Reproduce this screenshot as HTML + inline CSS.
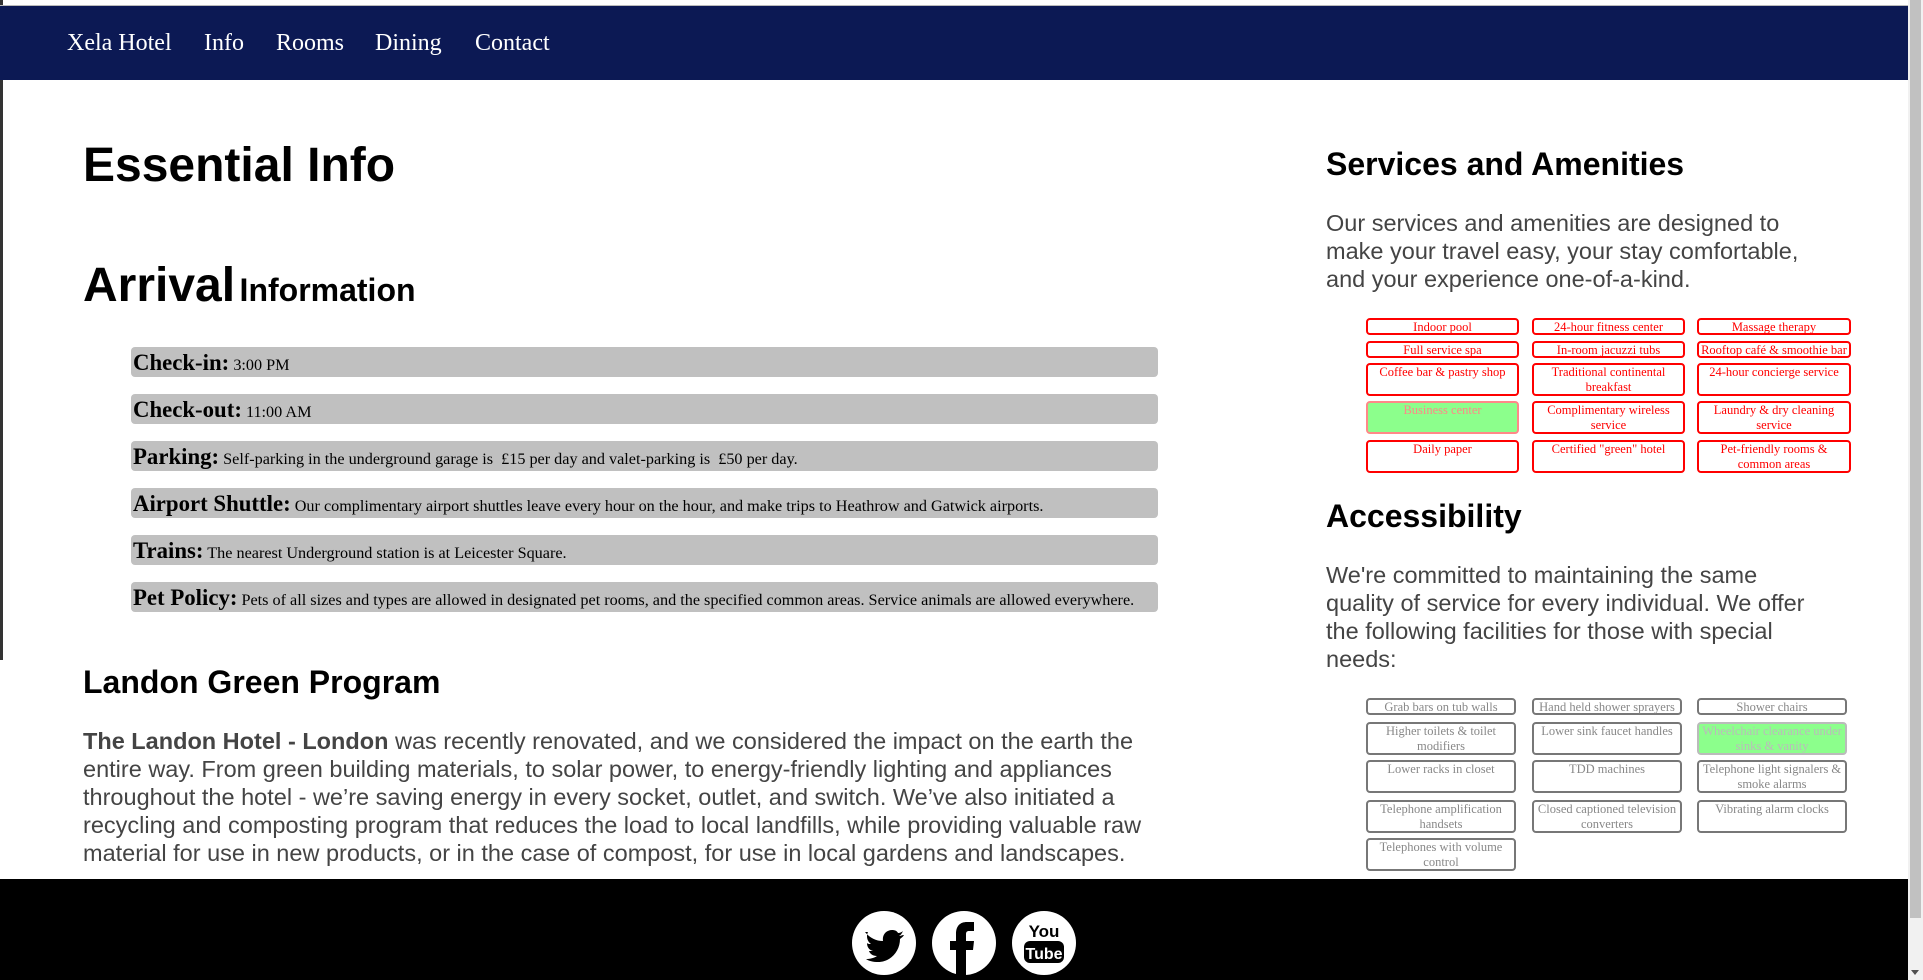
<!DOCTYPE html>
<html><head><meta charset="utf-8"><style>
*{margin:0;padding:0;box-sizing:border-box}
body{width:1923px;height:980px;overflow:hidden;background:#fff;position:relative;font-family:"Liberation Sans",sans-serif}
.a{position:absolute;white-space:nowrap}
#nav{position:absolute;left:0;top:5px;width:1908px;height:75px;background:#0c1954;border-top:1px solid #bbb}
#nav span{position:absolute;top:24px;font:24px "Liberation Serif",serif;color:#fff}
.bar{position:absolute;left:131px;width:1027px;height:30px;background:#c0c0c0;border-radius:4px;font:16.2px "Liberation Serif",serif;padding:3px 2px;white-space:nowrap;color:#000}
.bar b{font-size:22.8px}
.bx{position:absolute;border:2px solid red;border-radius:4px;color:red;font:12.5px/14.5px "Liberation Serif",serif;text-align:center;padding:0 1px}
.gx{position:absolute;border:2px solid #777;border-radius:4px;color:#888;font:12.5px/14.5px "Liberation Serif",serif;text-align:center;padding:0 1px}
.p{position:absolute;font-size:23.5px;line-height:28px;color:#444}
</style></head><body>
<div style="position:absolute;left:0;top:0;width:3px;height:660px;background:#333"></div>
<div id="nav"><span style="left:67px">Xela Hotel</span><span style="left:204px">Info</span><span style="left:276px">Rooms</span><span style="left:375px">Dining</span><span style="left:475px">Contact</span></div>

<div class="a" style="left:83px;top:138px;font-size:48px;font-weight:bold">Essential Info</div>
<div class="a" style="left:83px;top:258px;font-weight:bold"><span style="font-size:48px">Arrival</span> <span style="font-size:32px">Information</span></div>

<div class="bar" style="top:347px"><b>Check-in:</b> 3:00 PM</div>
<div class="bar" style="top:394px"><b>Check-out:</b> 11:00 AM</div>
<div class="bar" style="top:441px"><b>Parking:</b> Self-parking in the underground garage is &nbsp;£15 per day and valet-parking is &nbsp;£50 per day.</div>
<div class="bar" style="top:488px"><b>Airport Shuttle:</b> Our complimentary airport shuttles leave every hour on the hour, and make trips to Heathrow and Gatwick airports.</div>
<div class="bar" style="top:535px"><b>Trains:</b> The nearest Underground station is at Leicester Square.</div>
<div class="bar" style="top:582px"><b>Pet Policy:</b> Pets of all sizes and types are allowed in designated pet rooms, and the specified common areas. Service animals are allowed everywhere.</div>

<div class="a" style="left:83px;top:664px;font-size:32px;font-weight:bold">Landon Green Program</div>
<div class="p" style="left:83px;top:727px;width:1095px"><b>The Landon Hotel - London</b> was recently renovated, and we considered the impact on the earth the entire way. From green building materials, to solar power, to energy-friendly lighting and appliances throughout the hotel - we’re saving energy in every socket, outlet, and switch. We’ve also initiated a recycling and composting program that reduces the load to local landfills, while providing valuable raw material for use in new products, or in the case of compost, for use in local gardens and landscapes.</div>

<div class="a" style="left:1326px;top:146px;font-size:32px;font-weight:bold">Services and Amenities</div>
<div class="p" style="left:1326px;top:209px;width:505px">Our services and amenities are designed to make your travel easy, your stay comfortable, and your experience one-of-a-kind.</div>

<div class="bx" style="left:1366px;top:318px;width:153px;height:17px">Indoor pool</div>
<div class="bx" style="left:1532px;top:318px;width:153px;height:17px">24-hour fitness center</div>
<div class="bx" style="left:1697px;top:318px;width:154px;height:17px">Massage therapy</div>
<div class="bx" style="left:1366px;top:341px;width:153px;height:17px">Full service spa</div>
<div class="bx" style="left:1532px;top:341px;width:153px;height:17px">In-room jacuzzi tubs</div>
<div class="bx" style="left:1697px;top:341px;width:154px;height:17px">Rooftop café &amp; smoothie bar</div>
<div class="bx" style="left:1366px;top:363px;width:153px;height:33px">Coffee bar &amp; pastry shop</div>
<div class="bx" style="left:1532px;top:363px;width:153px;height:33px">Traditional continental breakfast</div>
<div class="bx" style="left:1697px;top:363px;width:154px;height:33px">24-hour concierge service</div>
<div class="bx" style="left:1366px;top:401px;width:153px;height:33px;background:#8cff8c;border-color:#f88;color:#f88">Business center</div>
<div class="bx" style="left:1532px;top:401px;width:153px;height:33px">Complimentary wireless service</div>
<div class="bx" style="left:1697px;top:401px;width:154px;height:33px">Laundry &amp; dry cleaning service</div>
<div class="bx" style="left:1366px;top:440px;width:153px;height:33px">Daily paper</div>
<div class="bx" style="left:1532px;top:440px;width:153px;height:33px">Certified "green" hotel</div>
<div class="bx" style="left:1697px;top:440px;width:154px;height:33px;padding:0">Pet-friendly rooms &amp; common areas</div>

<div class="a" style="left:1326px;top:498px;font-size:32px;font-weight:bold">Accessibility</div>
<div class="p" style="left:1326px;top:561px;width:505px">We're committed to maintaining the same quality of service for every individual. We offer the following facilities for those with special needs:</div>

<div class="gx" style="left:1366px;top:698px;width:150px;height:17px">Grab bars on tub walls</div>
<div class="gx" style="left:1532px;top:698px;width:150px;height:17px">Hand held shower sprayers</div>
<div class="gx" style="left:1697px;top:698px;width:150px;height:17px">Shower chairs</div>
<div class="gx" style="left:1366px;top:722px;width:150px;height:33px">Higher toilets &amp; toilet modifiers</div>
<div class="gx" style="left:1532px;top:722px;width:150px;height:33px">Lower sink faucet handles</div>
<div class="gx" style="left:1697px;top:722px;width:150px;height:33px;background:#8cff8c;border-color:#bbb;color:#bbb">Wheelchair clearance under sinks &amp; vanity</div>
<div class="gx" style="left:1366px;top:760px;width:150px;height:33px">Lower racks in closet</div>
<div class="gx" style="left:1532px;top:760px;width:150px;height:33px">TDD machines</div>
<div class="gx" style="left:1697px;top:760px;width:150px;height:33px">Telephone light signalers &amp; smoke alarms</div>
<div class="gx" style="left:1366px;top:800px;width:150px;height:33px">Telephone amplification handsets</div>
<div class="gx" style="left:1532px;top:800px;width:150px;height:33px">Closed captioned television converters</div>
<div class="gx" style="left:1697px;top:800px;width:150px;height:33px">Vibrating alarm clocks</div>
<div class="gx" style="left:1366px;top:838px;width:150px;height:33px">Telephones with volume control</div>

<div style="position:absolute;left:0;top:879px;width:1908px;height:101px;background:#000"></div>
<svg style="position:absolute;left:850px;top:910px" width="230" height="68" viewBox="0 0 230 68">
<circle cx="34" cy="33" r="32" fill="#fff"/>
<path d="M15 22c5 6 11 9 18 9-1-6 3-11 9-11 3 0 5 1 6 3 2 0 4-1 5-2-1 2-2 4-4 5 2 0 3-1 5-1-1 2-3 3-4 4 0 12-9 23-22 23-5 0-9-1-12-3 4 0 8-1 11-3-4 0-7-2-8-5h4c-4-1-6-4-6-8 1 1 2 1 4 1-4-3-5-8-3-12z" fill="#000"/>
<circle cx="114" cy="33" r="32" fill="#fff"/>
<path d="M106 66V40h-6v-9h6v-7c0-8 4-12 11-12h7v9h-5c-2 0-3 1-3 3v7h8l-1 9h-7v26z" fill="#000"/>
<circle cx="194" cy="33" r="32" fill="#fff"/>
<rect x="174" y="31" width="40" height="22" rx="6" fill="#000"/>
<text x="194" y="27" text-anchor="middle" font-family="Liberation Sans" font-weight="bold" font-size="17" fill="#000">You</text>
<text x="194" y="49" text-anchor="middle" font-family="Liberation Sans" font-weight="bold" font-size="16" fill="#fff">Tube</text>
</svg>

<div style="position:absolute;left:1908px;top:0;width:15px;height:980px;background:#f1f1f1"></div>
<div style="position:absolute;left:1910px;top:0;width:11px;height:918px;background:#c1c1c1"></div>
<div style="position:absolute;left:1911px;top:970px;width:0;height:0;border-left:4px solid transparent;border-right:4px solid transparent;border-top:5px solid #505050"></div>
</body></html>
